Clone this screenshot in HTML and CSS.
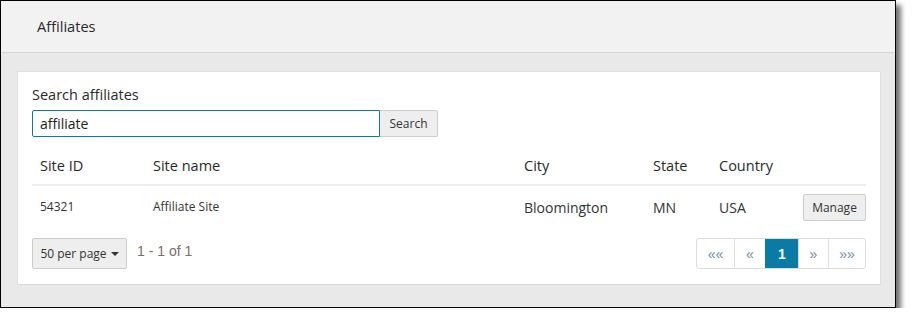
FILE: index.html
```html
<!DOCTYPE html>
<html>
<head>
<meta charset="utf-8">
<link rel="stylesheet" href="styles.css">
</head>
<body>
<div class="frame">
  <div class="page-header">Affiliates</div>
  <div class="content">
    <div class="card">
      <div class="label">Search affiliates</div>
      <div class="search">
        <div class="input">affiliate</div>
        <div class="btn btn-search">Search</div>
      </div>
      <div class="grid head">
        <div class="c">Site ID</div>
        <div class="c">Site name</div>
        <div class="c">City</div>
        <div class="c">State</div>
        <div class="c">Country</div>
        <div class="c end"></div>
      </div>
      <div class="grid row">
        <div class="c small">54321</div>
        <div class="c small">Affiliate Site</div>
        <div class="c">Bloomington</div>
        <div class="c">MN</div>
        <div class="c">USA</div>
        <div class="c end"><div class="btn btn-manage">Manage</div></div>
      </div>
      <div class="footer">
        <div class="btn btn-pp">50 per page <span class="caret"></span></div>
        <div class="count">1 - 1 of 1</div>
        <div class="pager">
          <div class="pg w1">&laquo;&laquo;</div>
          <div class="pg w2">&laquo;</div>
          <div class="pg w3 active">1</div>
          <div class="pg w4">&raquo;</div>
          <div class="pg w5">&raquo;&raquo;</div>
        </div>
      </div>
    </div>
  </div>
</div>
</body>
</html>
```

FILE: styles.css
```css
html, body {
  margin: 0;
  padding: 0;
  background: #ffffff;
}
body {
  font-family: "Open Sans", "Liberation Sans", sans-serif;
  color: #333333;
}
.frame {
  width: 894px;
  height: 306px;
  border: 1px solid #000000;
  background: #e9e9e9;
  box-shadow: 5px 5px 5px rgba(0, 0, 0, 0.55);
  display: flex;
  flex-direction: column;
}
.page-header {
  background: #f2f2f2;
  border-bottom: 1px solid #d5d5d5;
  box-sizing: border-box;
  height: 52px;
  padding: 15px 0 0 36px;
  font-size: 14.6px;
  line-height: 20px;
  color: #2a2a2a;
}
.content {
  padding: 18px 14px 0 16px;
}
.card {
  background: #ffffff;
  border: 1px solid #e0e0e0;
  border-bottom-color: #d8d8d8;
  padding: 13px 14px 15px 14px;
}
.label {
  font-size: 14.5px;
  line-height: 20px;
  margin-bottom: 5px;
  color: #2a2a2a;
}
.search {
  display: flex;
  height: 27px;
}
.input {
  box-sizing: border-box;
  width: 348px;
  height: 27px;
  border: 1px solid #0b7ba3;
  border-radius: 2px 0 0 2px;
  padding: 0 7px;
  font-size: 14px;
  line-height: 25px;
  color: #222;
}
.btn {
  box-sizing: border-box;
  background: #eeeeee;
  border: 1px solid #cccccc;
  border-radius: 2px;
  font-size: 12px;
  color: #333333;
  display: flex;
  align-items: center;
  justify-content: center;
}
.btn-search {
  width: 58px;
  height: 27px;
  border-left: none;
  border-radius: 0 2px 2px 0;
}
.grid {
  display: grid;
  grid-template-columns: 113px 371px 129px 66px 1fr auto;
  align-items: center;
}
.head {
  margin-top: 10px;
  padding: 9px 0 8px;
  border-bottom: 2px solid #eeeeee;
  font-size: 14.5px;
  line-height: 20px;
  color: #2a2a2a;
}
.row {
  padding: 8px 0;
  font-size: 14px;
  line-height: 20px;
}
.c {
  padding-left: 8px;
}
.c.small {
  font-size: 12px;
  position: relative;
  top: -1px;
}
.c.end {
  display: flex;
  justify-content: flex-end;
}
.btn-manage {
  width: 63px;
  height: 27px;
}
.footer {
  margin-top: 9px;
  display: flex;
  align-items: center;
  height: 31px;
}
.btn-pp {
  width: 95px;
  height: 31px;
  gap: 4px;
}
.caret {
  display: inline-block;
  width: 0;
  height: 0;
  border-left: 4px solid transparent;
  border-right: 4px solid transparent;
  border-top: 4px solid #333333;
  margin-top: 1px;
}
.count {
  margin-left: 10px;
  font-family: "Liberation Sans", Arial, sans-serif;
  font-size: 14px;
  color: #7a6f66;
  position: relative;
  top: -3px;
}
.pager {
  margin-left: auto;
  display: flex;
  height: 31px;
  border: 1px solid #dddddd;
  border-radius: 3px;
  box-sizing: border-box;
  overflow: hidden;
}
.pg {
  display: flex;
  align-items: center;
  justify-content: center;
  font-family: "Liberation Sans", Arial, sans-serif;
  font-size: 14px;
  color: #6f8aa8;
  border-left: 1px solid #dddddd;
  box-sizing: border-box;
}
.pg.w1 { width: 37px; border-left: none; }
.pg.w2 { width: 31px; }
.pg.w3 { width: 33px; }
.pg.w4 { width: 30px; }
.pg.w5 { width: 37px; }
.pg.active {
  background: #0a7ba4;
  color: #ffffff;
  font-weight: bold;
  font-size: 14px;
  border-left-color: #0a7ba4;
}
```
